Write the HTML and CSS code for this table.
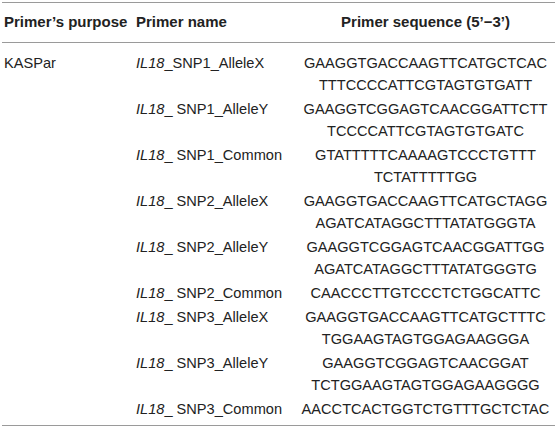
FILE: index.html
```
<!DOCTYPE html>
<html>
<head>
<meta charset="utf-8">
<link rel="stylesheet" href="styles.css">
</head>
<body>
<table class="primers">
  <colgroup>
    <col class="c-purpose">
    <col class="c-name">
    <col class="c-seq">
  </colgroup>
  <thead>
    <tr>
      <th class="purpose">Primer’s purpose</th>
      <th class="name">Primer name</th>
      <th class="seq">Primer sequence (5’−3’)</th>
    </tr>
  </thead>
  <tbody>
    <tr class="first">
      <td class="purpose">KASPar</td>
      <td class="name"><i>IL18</i>_SNP1_AlleleX</td>
      <td class="seq">GAAGGTGACCAAGTTCATGCTCAC<br>TTTCCCCATTCGTAGTGTGATT</td>
    </tr>
    <tr>
      <td class="purpose"></td>
      <td class="name"><i>IL18</i>_ SNP1_AlleleY</td>
      <td class="seq">GAAGGTCGGAGTCAACGGATTCTT<br>TCCCCATTCGTAGTGTGATC</td>
    </tr>
    <tr>
      <td class="purpose"></td>
      <td class="name"><i>IL18</i>_ SNP1_Common</td>
      <td class="seq">GTATTTTTCAAAAGTCCCTGTTT<br>TCTATTTTTGG</td>
    </tr>
    <tr>
      <td class="purpose"></td>
      <td class="name"><i>IL18</i>_ SNP2_AlleleX</td>
      <td class="seq">GAAGGTGACCAAGTTCATGCTAGG<br>AGATCATAGGCTTTATATGGGTA</td>
    </tr>
    <tr>
      <td class="purpose"></td>
      <td class="name"><i>IL18</i>_ SNP2_AlleleY</td>
      <td class="seq">GAAGGTCGGAGTCAACGGATTGG<br>AGATCATAGGCTTTATATGGGTG</td>
    </tr>
    <tr>
      <td class="purpose"></td>
      <td class="name"><i>IL18</i>_ SNP2_Common</td>
      <td class="seq">CAACCCTTGTCCCTCTGGCATTC</td>
    </tr>
    <tr>
      <td class="purpose"></td>
      <td class="name"><i>IL18</i>_ SNP3_AlleleX</td>
      <td class="seq">GAAGGTGACCAAGTTCATGCTTTC<br>TGGAAGTAGTGGAGAAGGGA</td>
    </tr>
    <tr>
      <td class="purpose"></td>
      <td class="name"><i>IL18</i>_ SNP3_AlleleY</td>
      <td class="seq">GAAGGTCGGAGTCAACGGAT<br>TCTGGAAGTAGTGGAGAAGGGG</td>
    </tr>
    <tr class="last">
      <td class="purpose"></td>
      <td class="name"><i>IL18</i>_ SNP3_Common</td>
      <td class="seq">AACCTCACTGGTCTGTTTGCTCTAC</td>
    </tr>
  </tbody>
</table>
</body>
</html>
```
FILE: styles.css
```
html, body {
  margin: 0;
  padding: 0;
  background: #fff;
}

body {
  font-family: "Liberation Sans", Arial, sans-serif;
  font-size: 14.6px;
  color: #222;
}

.primers {
  margin: 2px 0 0 2px;
  width: 553px;
  border-collapse: collapse;
  table-layout: fixed;
  border-top: 1px solid #9a9a9a;
  border-bottom: 1px solid #9a9a9a;
}

.c-purpose { width: 132px; }
.c-name { width: 162px; }
.c-seq { width: 259px; }

.primers th {
  font-size: 15px;
  font-weight: bold;
  line-height: 20px;
  padding: 9px 0 10px 0;
  border-bottom: 1px solid #9a9a9a;
  text-align: left;
}

.primers td {
  line-height: 22px;
  padding: 1px 0;
  vertical-align: top;
  text-align: left;
  white-space: nowrap;
}

.primers th.purpose,
.primers td.purpose {
  padding-left: 2px;
}

.primers th.name,
.primers td.name {
  padding-left: 2px;
}

.primers th.seq,
.primers td.seq {
  text-align: center;
}

.primers tr.first td {
  padding-top: 9px;
}

.primers tr.last td {
  padding-bottom: 5px;
}
```
